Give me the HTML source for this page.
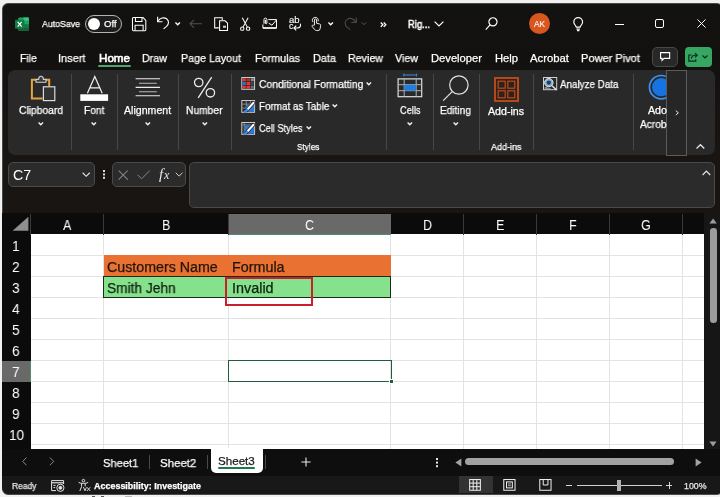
<!DOCTYPE html>
<html lang="en"><head><meta charset="utf-8"><title>Excel</title>
<style>
*{margin:0;padding:0;box-sizing:border-box}
html,body{width:720px;height:497px;overflow:hidden;background:#f1f1f1;font-family:"Liberation Sans",sans-serif}
.a{position:absolute}
.t{will-change:transform;-webkit-text-stroke:0.25px currentColor;position:absolute;white-space:nowrap;line-height:1;transform-origin:0 50%;display:block}
svg{position:absolute;overflow:visible}
#win{position:absolute;left:1.5px;top:2.8px;width:721px;height:491.8px;background:linear-gradient(to bottom,#121210 0,#131110 60px,#191513 158px,#191513 100%);border-radius:6px;overflow:hidden;border:0.8px solid #4a4a4a}
.sep{top:74px;width:1px;height:76px;background:#474747}
.chv{width:6px;height:4px;fill:none;stroke:#f0f0f0;stroke-width:1.45}
.fb{background:#2b2b2b;border:1px solid #4a4a4a;border-radius:5px}
.vl{top:234px;width:1px;height:214.5px;background:#e3e3e3}
.hl{left:31px;width:673.3px;height:1px;background:#e3e3e3}
.hs{top:214px;width:1px;height:20.5px;background:#3a3a3a}

</style></head>
<body>
<div id="win"></div>
<!-- ===== title bar ===== -->
<svg style="left:15px;top:16.6px" width="14.3" height="14.3" viewBox="0 0 15 15">
  <rect x="3.5" y="0.5" width="11" height="14" rx="1.2" fill="#21a366"/>
  <rect x="9" y="0.5" width="5.5" height="3.6" fill="#33c481"/>
  <rect x="9" y="4.1" width="5.5" height="3.5" fill="#21a366"/>
  <rect x="9" y="7.6" width="5.5" height="3.5" fill="#107c41"/>
  <rect x="3.5" y="7.6" width="5.5" height="3.5" fill="#185c37"/>
  <rect x="3.5" y="11.1" width="11" height="3.4" fill="#185c37"/>
  <rect x="0" y="2.8" width="9.8" height="9.6" rx="1" fill="#107c41"/>
  <path d="M2.8 5 L7 10.2 M7 5 L2.8 10.2" stroke="#fff" stroke-width="1.3" fill="none"/>
</svg>
<div class="a" style="left:85px;top:15px;width:37.2px;height:17.8px;border:1px solid #b4b4b4;border-radius:9px;background:#1e1e1e"></div>
<div class="a" style="left:87.8px;top:18px;width:12px;height:11.8px;border-radius:6px;background:#fff"></div>
<!-- save -->
<svg style="left:132px;top:16.7px" width="14.4" height="14.4" viewBox="0 0 15 15" fill="none" stroke="#fff" stroke-width="1.1">
  <path d="M1.5 0.6 H11.5 L14.4 3.5 V13.4 a1 1 0 0 1 -1 1 H1.5 a1 1 0 0 1 -1 -1 V1.6 a1 1 0 0 1 1 -1 Z"/>
  <path d="M3.6 0.8 V4.6 H10.4 V0.8"/>
  <path d="M3.2 14.2 V8.6 H11.6 V14.2"/>
</svg>
<!-- undo -->
<svg style="left:155.6px;top:15.4px" width="14.6" height="15.6" viewBox="0 0 16 16" fill="none" stroke="#fff" stroke-width="1.25">
  <path d="M1.8 1.5 V6.8 H7.1"/>
  <path d="M2.2 6.4 C4.2 2.8 8.6 1.4 11.6 3.6 C14.6 5.8 14.2 9.6 11.6 11.9 L8.3 14.6"/>
</svg>
<svg style="left:174.8px;top:21.6px" width="5.4" height="3.6" viewBox="0 0 6 4" fill="none" stroke="#fff" stroke-width="1.5"><path d="M0.5 0.5 L3 3 L5.5 0.5"/></svg>
<!-- back arrow (disabled) -->
<svg style="left:189.4px;top:18px" width="14" height="12" viewBox="0 0 14 12" fill="none" stroke="#505050" stroke-width="1.1"><path d="M13 5.8 H1 M5 1.8 L1 5.8 L5 9.8"/></svg>
<!-- paste -->
<svg style="left:213.6px;top:16.6px" width="14.4" height="14.2" viewBox="0 0 15 15" fill="none" stroke="#fff" stroke-width="1.1">
  <path d="M5 11.5 H0.6 V0.8 H8.6 V3.2"/>
  <path d="M5.8 4 H11.6 L14.2 6.6 V14.3 H5.8 Z" fill="#121110"/>
  <rect x="9.4" y="9.2" width="3.2" height="2.2" fill="#cfcfcf" stroke="none"/>
</svg>
<!-- scissors -->
<svg style="left:239.8px;top:16.8px" width="10.4" height="14.4" viewBox="0 0 11 15" fill="none" stroke="#fff" stroke-width="1.1">
  <path d="M2.4 0.6 L7.8 10.6 M8.6 0.6 L3.2 10.6"/>
  <circle cx="2.4" cy="12.2" r="1.8"/><circle cx="8.6" cy="12.2" r="1.8"/>
</svg>
<!-- email -->
<svg style="left:262.2px;top:16.6px" width="15.4" height="12.2" viewBox="0 0 17 13" fill="none" stroke="#fff" stroke-width="1.1">
  <path d="M7 2.6 H16 V12 H1 V8"/>
  <path d="M7.4 6.6 L11 8.8 L16 3"/>
  <path d="M2.2 7.2 V2.6 a1.6 1.6 0 0 1 3.2 0 V6.4 a0.8 0.8 0 0 1 -1.6 0 V3"/>
  <path d="M1 11.9 H16" stroke-width="1.6"/>
</svg>
<!-- touch -->
<svg style="left:309.6px;top:16.6px" width="12.4" height="14.4" viewBox="0 0 15 17" fill="none" stroke="#fff" stroke-width="1.1">
  <path d="M5.4 9.6 V3.4 a1.3 1.3 0 0 1 2.6 0 V7.4 L11.6 8.2 a1.6 1.6 0 0 1 1.3 1.8 L12.2 14 a2.6 2.6 0 0 1 -2.6 2.2 H8 a3 3 0 0 1 -2.4 -1.2 L2.6 11.2 a1.1 1.1 0 0 1 1.6 -1.4 Z"/>
  <path d="M3.6 6 A3.6 3.6 0 1 1 9.8 5"/>
</svg>
<svg style="left:327.8px;top:21.8px" width="5.4" height="3.6" viewBox="0 0 6 4" fill="none" stroke="#fff" stroke-width="1.5"><path d="M0.5 0.5 L3 3 L5.5 0.5"/></svg>
<!-- redo (disabled) -->
<svg style="left:343px;top:16px" width="15" height="15" viewBox="0 0 16 16" fill="none" stroke="#484848" stroke-width="1.2">
  <path d="M14.2 1.5 V6.8 H8.9"/>
  <path d="M13.8 6.4 C11.8 2.8 7.4 1.4 4.4 3.6 C1.4 5.8 1.8 9.6 4.4 11.9 L7.7 14.6"/>
</svg>
<svg style="left:361px;top:21.8px" width="5.6" height="3.6" viewBox="0 0 6 4" fill="none" stroke="#5a5a5a" stroke-width="1.1"><path d="M0.5 0.5 L3 3 L5.5 0.5"/></svg>
<!-- >> -->
<svg style="left:379.6px;top:21.8px" width="6.6" height="5.4" viewBox="0 0 7 6" fill="none" stroke="#fff" stroke-width="1.5"><path d="M0.7 0.6 L3 3 L0.7 5.4 M4 0.6 L6.3 3 L4 5.4"/></svg>
<svg style="left:434px;top:21px" width="10" height="6" viewBox="0 0 10 6" fill="none" stroke="#fff" stroke-width="1.2"><path d="M0.6 0.6 L5 5 L9.4 0.6"/></svg>
<!-- search -->
<svg style="left:485px;top:16.6px" width="13" height="13.6" viewBox="0 0 13 14" fill="none" stroke="#fff" stroke-width="1.2"><circle cx="8" cy="5" r="4.2"/><path d="M5 8.2 L0.6 13"/></svg>
<!-- avatar -->
<div class="a" style="left:528.6px;top:13.3px;width:21px;height:21px;border-radius:11px;background:#d7571f"></div>
<!-- bulb -->
<svg style="left:573.4px;top:16.6px" width="10.4" height="14.6" viewBox="0 0 11 16" fill="none" stroke="#fff" stroke-width="1.3">
  <path d="M3.4 11.2 C3.2 9.4 0.7 8.2 0.7 5.4 A4.8 4.8 0 0 1 10.3 5.4 C10.3 8.2 7.8 9.4 7.6 11.2 Z"/>
  <path d="M3.6 13.2 H7.4 M4.2 15 H6.8"/>
</svg>
<!-- window controls -->
<div class="a" style="left:615px;top:23.5px;width:9px;height:1.2px;background:#fff"></div>
<div class="a" style="left:655.4px;top:19.2px;width:9px;height:9px;border:1.1px solid #fff;border-radius:2px"></div>
<svg style="left:697px;top:19.2px" width="9" height="9" viewBox="0 0 10 10" fill="none" stroke="#fff" stroke-width="1.1"><path d="M0.5 0.5 L9.5 9.5 M9.5 0.5 L0.5 9.5"/></svg>
<!-- ===== tab row ===== -->
<div class="a" style="left:98.4px;top:65.1px;width:32.2px;height:1.8px;border-radius:1px;background:#4da66f"></div>
<div class="a" style="left:651.5px;top:46.5px;width:26px;height:20px;border:1px solid #484848;border-radius:5px;background:#282828"></div>
<svg style="left:659.6px;top:52px" width="10.2" height="9.4" viewBox="0 0 11 10" fill="none" stroke="#fff" stroke-width="1.2"><path d="M0.6 0.6 H10.4 V6.8 H4.4 L2.2 9 V6.8 H0.6 Z"/></svg>
<div class="a" style="left:685px;top:47px;width:27px;height:20px;border-radius:4px;background:#35a763"></div>
<svg style="left:688.4px;top:51.8px" width="10" height="9.8" viewBox="0 0 11 11" fill="none" stroke="#0c2a18" stroke-width="1.3"><path d="M4 3.4 H0.8 V10.2 H8.6 V8.2"/><path d="M3.6 7.4 C4 5 5.6 3.6 7.8 3.6 H10 M7.8 1.2 L10.2 3.6 L7.8 6"/></svg>
<svg style="left:702px;top:55px" width="6" height="4" viewBox="0 0 6 4" fill="none" stroke="#0c2a18" stroke-width="1.2"><path d="M0.5 0.5 L3 3 L5.5 0.5"/></svg>
<!-- ===== ribbon ===== -->
<div class="a" id="rib" style="left:8px;top:70px;width:706.6px;height:85px;border-radius:7px;background:#292929"></div>
<!-- separators -->
<div class="a sep" style="left:70.5px"></div>
<div class="a sep" style="left:117px"></div>
<div class="a sep" style="left:178px"></div>
<div class="a sep" style="left:230.5px"></div>
<div class="a sep" style="left:386px"></div>
<div class="a sep" style="left:432.5px"></div>
<div class="a sep" style="left:479px"></div>
<div class="a sep" style="left:532.5px"></div>
<div class="a sep" style="left:633px"></div>
<!-- clipboard icon -->
<svg style="left:30px;top:74px" width="27" height="28" viewBox="0 0 27 28" fill="none">
  <path d="M6 5.8 H1.9 V24.4 H12.5" stroke="#e3a445" stroke-width="2"/>
  <path d="M15.4 5.8 H19.2 V12" stroke="#e3a445" stroke-width="2"/>
  <path d="M6 8.2 V5.4 H8.6 C8.6 3.4 9.6 2.2 11 2.2 C12.4 2.2 13.4 3.4 13.4 5.4 H16 V8.2 Z" stroke="#d0d0d0" stroke-width="1.1" fill="#3a3a3a"/>
  <rect x="13.4" y="12.8" width="11.4" height="13.8" stroke="#dcdcdc" stroke-width="1.2" fill="#333"/>
</svg>
<!-- font icon -->
<svg style="left:80px;top:75px" width="29" height="27" viewBox="0 0 29 27" fill="none">
  <path d="M7.4 18.3 L14.8 1.6 L22.2 18.3 M10 12.9 H19.6" stroke="#f2f2f2" stroke-width="1.2"/>
  <rect x="0.3" y="19.3" width="27.8" height="6.6" fill="#fff"/>
</svg>
<!-- alignment icon -->
<svg style="left:135px;top:77px" width="26" height="20" viewBox="0 0 26 20" fill="none" stroke-width="1.1">
  <path d="M0.6 1.7 H25 M0.6 10.4 H25 M0.6 18.8 H25" stroke="#ececec"/>
  <path d="M4 6.2 H21.8 M4 14.7 H21.8" stroke="#b9b9b9"/>
</svg>
<!-- percent icon -->
<svg style="left:193px;top:76px" width="24" height="23" viewBox="0 0 24 23" fill="none" stroke="#ececec" stroke-width="1.3">
  <circle cx="5.7" cy="6.5" r="4.2"/><circle cx="17.4" cy="16.8" r="4.2"/><path d="M18.7 1.2 L5.2 21.9"/>
</svg>
<!-- big chevrons -->
<svg class="chv" style="left:38.2px;top:121.6px"><path d="M0.6 0.6 L2.8 2.8 L5 0.6"/></svg>
<svg class="chv" style="left:91.4px;top:121.6px"><path d="M0.6 0.6 L2.8 2.8 L5 0.6"/></svg>
<svg class="chv" style="left:145px;top:121.6px"><path d="M0.6 0.6 L2.8 2.8 L5 0.6"/></svg>
<svg class="chv" style="left:201.6px;top:121.6px"><path d="M0.6 0.6 L2.8 2.8 L5 0.6"/></svg>
<svg class="chv" style="left:407.2px;top:121.6px"><path d="M0.6 0.6 L2.8 2.8 L5 0.6"/></svg>
<svg class="chv" style="left:452.8px;top:121.6px"><path d="M0.6 0.6 L2.8 2.8 L5 0.6"/></svg>
<svg class="chv" style="left:366.2px;top:82.2px"><path d="M0.6 0.6 L2.8 2.8 L5 0.6"/></svg>
<svg class="chv" style="left:332px;top:104.4px"><path d="M0.6 0.6 L2.8 2.8 L5 0.6"/></svg>
<svg class="chv" style="left:305.8px;top:126.2px"><path d="M0.6 0.6 L2.8 2.8 L5 0.6"/></svg>
<!-- conditional formatting icon -->
<svg style="left:241px;top:77.2px" width="14.4" height="12.8" viewBox="0 0 14 13">
  <rect x="0.5" y="0.5" width="13" height="12" fill="#2e2e2e" stroke="#cfcfcf" stroke-width="1"/>
  <rect x="1.3" y="1.3" width="3.3" height="2.9" fill="#e23838"/><rect x="5.4" y="1.3" width="3.6" height="2.9" fill="#b82c2c"/><rect x="9.8" y="1.3" width="2.9" height="2.9" fill="#8e8e8e"/>
  <rect x="1.3" y="5" width="3.3" height="3.2" fill="#2f6fc4"/><rect x="5.4" y="5" width="3.6" height="3.2" fill="#e23838"/><rect x="9.8" y="5" width="2.9" height="3.2" fill="#444"/>
  <rect x="1.3" y="9" width="3.3" height="2.8" fill="#e23838"/><rect x="5.4" y="9" width="3.6" height="2.8" fill="#e23838"/><rect x="9.8" y="9" width="2.9" height="2.8" fill="#6c6c6c"/>
</svg>
<!-- format as table icon -->
<svg style="left:241px;top:99.8px" width="14.4" height="12.8" viewBox="0 0 14 13">
  <rect x="0.5" y="0.5" width="13" height="12" fill="#2e2e2e" stroke="#cfcfcf" stroke-width="1"/>
  <path d="M5 1 V12 M9.2 1 V12 M1 4.2 H13 M1 8.2 H13" stroke="#9a9a9a" stroke-width="0.8"/>
  <path d="M5.4 4.6 H13 V12 H5.4 Z" fill="#2b7be0"/>
  <path d="M12.4 2.8 L5.2 10.6" stroke="#262626" stroke-width="3.6" stroke-linecap="round"/>
  <path d="M12.4 2.8 L6.4 9.4" stroke="#fff" stroke-width="2" stroke-linecap="round"/>
  <path d="M5.8 10 L3.4 12.2" stroke="#3b8df0" stroke-width="2.2" stroke-linecap="round"/>
</svg>
<!-- cell styles icon -->
<svg style="left:241px;top:122px" width="14.4" height="12.8" viewBox="0 0 14 13">
  <rect x="0.5" y="0.5" width="13" height="12" fill="#2e2e2e" stroke="#cfcfcf" stroke-width="1"/>
  <path d="M1 3 H13 M3 1 V12" stroke="#9a9a9a" stroke-width="0.8"/>
  <path d="M3.4 3.4 H13 V12 H3.4 Z" fill="#2b7be0"/>
  <path d="M12.4 2.8 L5.2 10.6" stroke="#262626" stroke-width="3.6" stroke-linecap="round"/>
  <path d="M12.4 2.8 L6.4 9.4" stroke="#fff" stroke-width="2" stroke-linecap="round"/>
  <path d="M5.8 10 L3.4 12.2" stroke="#3b8df0" stroke-width="2.2" stroke-linecap="round"/>
</svg>
<!-- cells icon -->
<svg style="left:397px;top:73px" width="26" height="25" viewBox="0 0 26 25" fill="none">
  <path d="M6.8 2 H19.6 M6.8 0.6 V3.4 M19.6 0.6 V3.4" stroke="#3a8ee6" stroke-width="1"/>
  <rect x="1.1" y="5.9" width="23.6" height="17.8" stroke="#e0e0e0" stroke-width="1.2"/>
  <path d="M7.2 6 V23.6 M19.2 6 V23.6 M1.2 11.7 H24.6 M1.2 17.7 H24.6" stroke="#b0b0b0" stroke-width="1"/>
  <rect x="7.4" y="11.8" width="11.8" height="5.8" fill="#1f7fe0"/>
</svg>
<!-- editing icon -->
<svg style="left:442px;top:74px" width="28" height="28" viewBox="0 0 28 28" fill="none" stroke="#e4e4e4" stroke-width="1.2">
  <circle cx="16.9" cy="11" r="9.2"/><path d="M10.2 17.6 L1.2 26.6"/>
</svg>
<!-- add-ins icon -->
<svg style="left:494px;top:77px" width="25" height="25" viewBox="0 0 25 25" fill="none" stroke="#bd4b1b">
  <rect x="1" y="1" width="23" height="23" stroke-width="1.9" fill="#30201a"/>
  <rect x="4.2" y="4.2" width="7" height="7" stroke-width="1.2"/><rect x="13.8" y="4.2" width="7" height="7" stroke-width="1.2"/>
  <rect x="4.2" y="13.8" width="7" height="7" stroke-width="1.2"/><rect x="13.8" y="13.8" width="7" height="7" stroke-width="1.2"/>
</svg>
<!-- analyze data icon -->
<svg style="left:543px;top:77px" width="15" height="14" viewBox="0 0 15 14" fill="none">
  <rect x="0.5" y="0.5" width="13.2" height="12.2" stroke="#cfcfcf" stroke-width="1"/>
  <path d="M1.6 10.4 H4.4 M1.6 11.6 H7.6" stroke="#aaa" stroke-width="0.8"/>
  <circle cx="5.8" cy="5.6" r="4.2" stroke="#e6e6e6" stroke-width="1" fill="#7fb0e0"/>
  <circle cx="5.8" cy="5.6" r="2.2" fill="#2c3e55"/>
  <path d="M9 8.8 L13.6 13" stroke="#e6e6e6" stroke-width="1.5"/>
</svg>
<!-- adobe icon -->
<svg style="left:648px;top:74px" width="19" height="27" viewBox="0 0 19 27" fill="none">
  <circle cx="13.2" cy="13.2" r="11.7" stroke="#3d92ee" stroke-width="1.7"/>
  <circle cx="13.2" cy="13.2" r="9.1" fill="#1873e2"/>
</svg>
<!-- overlay scroll button -->
<div class="a" style="left:666px;top:70px;width:21px;height:85.5px;background:#262626;border:1px solid #5c5c5c"></div>
<svg style="left:675px;top:110px" width="5" height="6" viewBox="0 0 5 6" fill="none" stroke="#e8e8e8" stroke-width="1"><path d="M0.8 0.6 L3.4 2.8 L0.8 5"/></svg>
<svg style="left:696px;top:144px" width="9" height="5" viewBox="0 0 9 5" fill="none" stroke="#e8e8e8" stroke-width="1.2"><path d="M0.5 4.5 L4.4 0.7 L8.3 4.5"/></svg>
<!-- ===== formula bar ===== -->

<div class="a fb" style="left:8px;top:162.3px;width:87.4px;height:24.8px"></div>
<svg style="left:82px;top:172px" width="8.6" height="5.6" viewBox="0 0 9 6" fill="none" stroke="#e6e6e6" stroke-width="1.2"><path d="M0.6 0.8 L4.4 4.6 L8.2 0.8"/></svg>
<div class="a" style="left:103.3px;top:170px;width:1.6px;height:1.6px;background:#e0e0e0;box-shadow:0 3.4px 0 #e0e0e0,0 6.8px 0 #e0e0e0"></div>
<div class="a fb" style="left:112px;top:162.3px;width:73.5px;height:24.8px"></div>
<svg style="left:117.6px;top:169.6px" width="10.4" height="10.2" viewBox="0 0 10 10" fill="none" stroke="#8c8c8c" stroke-width="1"><path d="M0.5 0.5 L9.5 9.5 M9.5 0.5 L0.5 9.5"/></svg>
<svg style="left:136.8px;top:169.8px" width="13.4" height="9.6" viewBox="0 0 14 10" fill="none" stroke="#8c8c8c" stroke-width="1"><path d="M0.6 5 L4.8 9.2 L13.4 0.6"/></svg>
<svg style="left:174.6px;top:172px" width="8.4" height="5.4" viewBox="0 0 9 6" fill="none" stroke="#cfcfcf" stroke-width="1.1"><path d="M0.6 0.8 L4.4 4.6 L8.2 0.8"/></svg>
<div class="a fb" style="left:188.6px;top:162.3px;width:526.2px;height:45.4px;border-radius:5px"></div>
<svg style="left:702.4px;top:169.6px" width="9" height="6" viewBox="0 0 9 6" fill="none" stroke="#e6e6e6" stroke-width="1.2"><path d="M0.6 5 L4.4 1.2 L8.2 5"/></svg>
<!-- ===== grid ===== -->
<div class="a" style="left:2px;top:213px;width:702.3px;height:236px;background:#0b0b0b"></div>
<div class="a" style="left:30.6px;top:234px;width:673.7px;height:214.6px;background:#fff"></div>
<!-- gridlines vertical -->
<div class="a vl" style="left:103px"></div><div class="a vl" style="left:228px"></div><div class="a vl" style="left:390px"></div>
<div class="a vl" style="left:463px"></div><div class="a vl" style="left:536px"></div><div class="a vl" style="left:609px"></div><div class="a vl" style="left:682px"></div>
<!-- gridlines horizontal -->
<div class="a hl" style="top:255px"></div><div class="a hl" style="top:276px"></div><div class="a hl" style="top:297px"></div>
<div class="a hl" style="top:318px"></div><div class="a hl" style="top:339px"></div><div class="a hl" style="top:360px"></div>
<div class="a hl" style="top:381px"></div><div class="a hl" style="top:402px"></div><div class="a hl" style="top:423px"></div><div class="a hl" style="top:444px"></div>
<!-- header separators -->
<div class="a hs" style="left:30px"></div><div class="a hs" style="left:103px"></div><div class="a hs" style="left:228px"></div><div class="a hs" style="left:390px"></div>
<div class="a hs" style="left:463px"></div><div class="a hs" style="left:536px"></div><div class="a hs" style="left:609px"></div><div class="a hs" style="left:682px"></div>
<!-- select-all triangle -->
<svg style="left:12px;top:216.4px" width="17" height="15.8" viewBox="0 0 17 15"><path d="M16.4 0.4 V14.4 H0.6 Z" fill="#8f8f8f"/></svg>
<!-- selected col / row header -->
<div class="a" style="left:229px;top:213.5px;width:161.5px;height:21px;background:#696969;border-bottom:1.2px solid #4f8f6a"></div>
<div class="a" style="left:2px;top:361px;width:29px;height:20.6px;background:#696969;border-right:1.2px solid #4f8f6a"></div>
<!-- filled cells -->
<div class="a" style="left:104px;top:255px;width:287px;height:21.4px;background:#e97132"></div>
<div class="a" style="left:103.3px;top:276.3px;width:288px;height:21.4px;background:#86e18c;border:1px solid #1c2b1c"></div>
<!-- selection -->
<div class="a" style="left:228px;top:360px;width:164px;height:22.3px;border:1.7px solid #1f5e3c"></div>
<div class="a" style="left:388.6px;top:378.8px;width:5.2px;height:5.2px;background:#1f5e3c;border:0.9px solid #fff"></div>
<!-- red box -->
<div class="a" style="left:225px;top:277.2px;width:88px;height:29px;border:2.4px solid #cc1f2e"></div>
<!-- vertical scrollbar -->
<div class="a" style="left:704.3px;top:212px;width:16px;height:237px;background:#161616"></div>
<svg style="left:709.2px;top:217.7px" width="8.2" height="6.3" viewBox="0 0 8 6"><path d="M4 0.4 L7.6 5.4 H0.4 Z" fill="#9c9c9c"/></svg>
<div class="a" style="left:710px;top:228px;width:6.6px;height:95px;border-radius:3.3px;background:#9c9c9c"></div>
<svg style="left:709.3px;top:441px" width="8" height="6" viewBox="0 0 8 6"><path d="M4 5.6 L7.6 0.6 H0.4 Z" fill="#9c9c9c"/></svg>
<!-- ===== sheet tabs bar ===== -->
<div class="a" style="left:2px;top:448.5px;width:718px;height:27.5px;background:#0e0e0e"></div>
<svg style="left:21.6px;top:457.2px" width="5.4" height="8.8" viewBox="0 0 6 10" fill="none" stroke="#8e8e8e" stroke-width="1.1"><path d="M5 0.6 L0.8 5 L5 9.4"/></svg>
<svg style="left:49.2px;top:457.2px" width="5.4" height="8.8" viewBox="0 0 6 10" fill="none" stroke="#8e8e8e" stroke-width="1.1"><path d="M1 0.6 L5.2 5 L1 9.4"/></svg>
<div class="a" style="left:149px;top:455px;width:1px;height:14px;background:#4a4a4a"></div>
<div class="a" style="left:206.5px;top:455px;width:1px;height:14px;background:#4a4a4a"></div>
<div class="a" style="left:265.4px;top:455px;width:1px;height:14px;background:#4a4a4a"></div>
<div class="a" style="left:210.5px;top:448px;width:52px;height:25px;background:#fff;border-radius:0 0 5px 5px"></div>
<div class="a" style="left:217.5px;top:467.3px;width:37px;height:2px;border-radius:1px;background:#1d7a48"></div>
<svg style="left:301px;top:456.5px" width="10" height="10" viewBox="0 0 10 10" fill="none" stroke="#e8e8e8" stroke-width="1.1"><path d="M5 0.4 V9.6 M0.4 5 H9.6"/></svg>
<div class="a" style="left:436px;top:458px;width:1.8px;height:1.8px;background:#e6e6e6;box-shadow:0 3.6px 0 #e6e6e6,0 7.2px 0 #e6e6e6"></div>
<svg style="left:454.5px;top:457.5px" width="7" height="9" viewBox="0 0 7 9"><path d="M0.4 4.5 L6.4 0.4 V8.6 Z" fill="#a2a2a2"/></svg>
<div class="a" style="left:465px;top:457.6px;width:209.2px;height:7.6px;border-radius:3.8px;background:#a2a2a2"></div>
<svg style="left:695px;top:457.5px" width="7" height="9" viewBox="0 0 7 9"><path d="M6.6 4.5 L0.6 0.4 V8.6 Z" fill="#a2a2a2"/></svg>
<!-- ===== status bar ===== -->
<div class="a" style="left:2px;top:476px;width:718px;height:17.6px;background:#181818;border-radius:0 0 7px 7px"></div>
<div class="a" style="left:459px;top:476px;width:33.5px;height:17.4px;background:#333"></div>
<!-- abc arrow -->
<svg style="left:293.4px;top:23px" width="9" height="8" viewBox="0 0 9 8" fill="none" stroke="#fff" stroke-width="1.1"><path d="M7.3 0.6 C8.2 3 7 4.8 4.4 5 H1.2 M3.2 2.6 L0.9 5 L3.2 7.4"/></svg>
<!-- status icons -->
<svg style="left:51px;top:480px" width="14" height="12" viewBox="0 0 14 12" fill="none" stroke="#e6e6e6" stroke-width="1">
  <path d="M5 10.6 H0.6 V0.6 H12.6 V4"/><path d="M0.6 2.8 H12.6" stroke-width="1.2"/><path d="M2.4 5.4 H4.6 M2.4 7.6 H4.2"/>
  <circle cx="9.4" cy="7.8" r="3.6"/><circle cx="9.4" cy="7.8" r="1.5" fill="#e6e6e6"/>
</svg>
<svg style="left:78.4px;top:479.2px" width="13" height="13" viewBox="0 0 13 13" fill="none" stroke="#e6e6e6" stroke-width="1">
  <circle cx="5.4" cy="1.7" r="1.3"/>
  <path d="M0.6 3.4 C2.6 4.8 8.2 4.8 10.2 3.4 M3.6 4.6 V7.6 L1.8 12 M7.2 4.6 V7.4"/>
  <path d="M5.4 8 L7 11.8 L8.4 8.4 M9 8.2 L12.2 12 M12.2 8.2 L9 12" stroke-width="0.9"/>
</svg>
<!-- view buttons -->
<svg style="left:469.2px;top:479.2px" width="12" height="11.8" viewBox="0 0 13 13" fill="none" stroke="#f2f2f2" stroke-width="1.1">
  <rect x="0.6" y="0.6" width="11.8" height="11.8"/><path d="M4.5 0.6 V12.4 M8.5 0.6 V12.4 M0.6 4.5 H12.4 M0.6 8.5 H12.4"/>
</svg>
<svg style="left:503px;top:479.2px" width="13.2" height="11.8" viewBox="0 0 14 13" fill="none" stroke="#f2f2f2" stroke-width="1.1">
  <rect x="0.6" y="0.6" width="12.4" height="11.8"/><rect x="3.6" y="3.2" width="6.4" height="6.6"/><path d="M5.2 5.4 H8.4 M5.2 7.4 H8.4" stroke-width="0.8"/>
</svg>
<svg style="left:539px;top:479.2px" width="13.2" height="11.8" viewBox="0 0 14 13" fill="none" stroke="#f2f2f2" stroke-width="1.1">
  <rect x="0.6" y="0.6" width="12.4" height="11.8"/><path d="M4.4 0.6 V6.6 H9.6 V0.6"/>
</svg>
<!-- zoom slider -->
<div class="a" style="left:566px;top:485.2px;width:6px;height:1px;background:#d8d8d8"></div>
<div class="a" style="left:577px;top:485.2px;width:84.5px;height:1px;background:#d0d0d0"></div>
<div class="a" style="left:617.3px;top:480px;width:4px;height:11.4px;background:#b4b4b4"></div>
<div class="a" style="left:666px;top:485.2px;width:6.4px;height:1px;background:#d8d8d8"></div>
<div class="a" style="left:668.7px;top:482.4px;width:1px;height:6.6px;background:#d8d8d8"></div>
<!-- stray marks below window -->
<div class="a" style="left:92px;top:495.6px;width:3px;height:1.4px;background:#555"></div>
<div class="a" style="left:101px;top:495.6px;width:3px;height:1.4px;background:#555"></div>
<div class="a" style="left:125px;top:495.6px;width:7px;height:1.4px;background:#bbb"></div>

<span class="t" id="t0" style="left:42px;top:19.37px;font-size:9.6px;color:#fff;transform:scaleX(0.9133);">AutoSave</span>
<span class="t" id="t1" style="left:104px;top:19.37px;font-size:9.6px;color:#fff;transform:scaleX(0.9901);">Off</span>
<span class="t" id="t2" style="left:408px;top:18.61px;font-size:10.5px;color:#fff;transform:scaleX(0.8974);-webkit-text-stroke:0.5px #fff;">Rig...</span>
<span class="t" id="t3" style="left:533.6px;top:19.69px;font-size:8.4px;color:#fff;transform:scaleX(0.9832);-webkit-text-stroke:0.1px #fff;">AK</span>
<span class="t" id="t4" style="left:20px;top:52.52px;font-size:11.2px;color:#fff;transform:scaleX(0.9428);">File</span>
<span class="t" id="t5" style="left:58px;top:52.52px;font-size:11.2px;color:#fff;transform:scaleX(0.9827);">Insert</span>
<span class="t" id="t6" style="left:99px;top:52.52px;font-size:11.2px;color:#fff;transform:scaleX(1.0387);-webkit-text-stroke:0.6px #fff;">Home</span>
<span class="t" id="t7" style="left:142px;top:52.52px;font-size:11.2px;color:#fff;transform:scaleX(0.9575);">Draw</span>
<span class="t" id="t8" style="left:181px;top:52.52px;font-size:11.2px;color:#fff;transform:scaleX(0.9550);">Page Layout</span>
<span class="t" id="t9" style="left:255px;top:52.52px;font-size:11.2px;color:#fff;transform:scaleX(0.9651);">Formulas</span>
<span class="t" id="t10" style="left:313px;top:52.52px;font-size:11.2px;color:#fff;transform:scaleX(0.9729);">Data</span>
<span class="t" id="t11" style="left:348px;top:52.52px;font-size:11.2px;color:#fff;transform:scaleX(0.9540);">Review</span>
<span class="t" id="t12" style="left:395px;top:52.52px;font-size:11.2px;color:#fff;transform:scaleX(0.9565);">View</span>
<span class="t" id="t13" style="left:431px;top:52.52px;font-size:11.2px;color:#fff;transform:scaleX(1.0000);">Developer</span>
<span class="t" id="t14" style="left:495px;top:52.52px;font-size:11.2px;color:#fff;transform:scaleX(0.9993);">Help</span>
<span class="t" id="t15" style="left:530px;top:52.52px;font-size:11.2px;color:#fff;transform:scaleX(1.0113);">Acrobat</span>
<span class="t" id="t16" style="left:581px;top:52.52px;font-size:11.2px;color:#fff;transform:scaleX(0.9882);">Power Pivot</span>
<span class="t" id="t17" style="left:19px;top:105.03px;font-size:10.6px;color:#fff;transform:scaleX(0.9700);">Clipboard</span>
<span class="t" id="t18" style="left:84px;top:105.03px;font-size:10.6px;color:#fff;transform:scaleX(0.9668);">Font</span>
<span class="t" id="t19" style="left:124px;top:105.03px;font-size:10.6px;color:#fff;transform:scaleX(0.9977);">Alignment</span>
<span class="t" id="t20" style="left:186px;top:105.03px;font-size:10.6px;color:#fff;transform:scaleX(0.9685);">Number</span>
<span class="t" id="t21" style="left:258.6px;top:78.67px;font-size:10.9px;color:#fff;transform:scaleX(0.9527);">Conditional Formatting</span>
<span class="t" id="t22" style="left:258.6px;top:100.77px;font-size:10.9px;color:#fff;transform:scaleX(0.9038);">Format as Table</span>
<span class="t" id="t23" style="left:258.6px;top:122.87px;font-size:10.9px;color:#fff;transform:scaleX(0.8474);">Cell Styles</span>
<span class="t" id="t24" style="left:296.8px;top:142.24px;font-size:9.4px;color:#fff;transform:scaleX(0.8774);">Styles</span>
<span class="t" id="t25" style="left:399.5px;top:105.03px;font-size:10.6px;color:#fff;transform:scaleX(0.8706);">Cells</span>
<span class="t" id="t26" style="left:440px;top:105.03px;font-size:10.6px;color:#fff;transform:scaleX(0.9566);">Editing</span>
<span class="t" id="t27" style="left:488px;top:106.03px;font-size:10.6px;color:#fff;transform:scaleX(1.0022);">Add-ins</span>
<span class="t" id="t28" style="left:490.5px;top:142.04px;font-size:9.4px;color:#fff;transform:scaleX(0.9592);">Add-ins</span>
<span class="t" id="t29" style="left:560.4px;top:78.67px;font-size:10.9px;color:#fff;transform:scaleX(0.9015);">Analyze Data</span>
<span class="t" id="t30" style="left:647.5px;top:105.03px;font-size:10.6px;color:#fff;transform:scaleX(1.0075);overflow:hidden;">Ado</span>
<span class="t" id="t31" style="left:640px;top:118.53px;font-size:10.6px;color:#fff;transform:scaleX(0.9571);overflow:hidden;">Acrob</span>
<span class="t" id="t32" style="left:12.6px;top:168.25px;font-size:14px;color:#fff;transform:scaleX(1.0164);-webkit-text-stroke:0;">C7</span>
<span class="t" id="t33" style="left:62.9px;top:217.85px;font-size:14px;color:#fff;transform:scaleX(0.9000);-webkit-text-stroke:0;">A</span>
<span class="t" id="t34" style="left:162.3px;top:217.85px;font-size:14px;color:#fff;transform:scaleX(0.9000);-webkit-text-stroke:0;">B</span>
<span class="t" id="t35" style="left:305.44px;top:217.85px;font-size:14px;color:#fff;transform:scaleX(0.9000);-webkit-text-stroke:0;">C</span>
<span class="t" id="t36" style="left:422.74px;top:217.85px;font-size:14px;color:#fff;transform:scaleX(0.9000);-webkit-text-stroke:0;">D</span>
<span class="t" id="t37" style="left:496.2px;top:217.85px;font-size:14px;color:#fff;transform:scaleX(0.9000);-webkit-text-stroke:0;">E</span>
<span class="t" id="t38" style="left:569.45px;top:217.85px;font-size:14px;color:#fff;transform:scaleX(0.9000);-webkit-text-stroke:0;">F</span>
<span class="t" id="t39" style="left:641.4px;top:217.85px;font-size:14px;color:#fff;transform:scaleX(0.9000);-webkit-text-stroke:0;">G</span>
<span class="t" id="t40" style="left:12.2px;top:238.83px;font-size:14.5px;color:#fff;transform:scaleX(0.9408);-webkit-text-stroke:0;">1</span>
<span class="t" id="t41" style="left:12.2px;top:259.83px;font-size:14.5px;color:#fff;transform:scaleX(0.9408);-webkit-text-stroke:0;">2</span>
<span class="t" id="t42" style="left:12.2px;top:280.83px;font-size:14.5px;color:#fff;transform:scaleX(0.9408);-webkit-text-stroke:0;">3</span>
<span class="t" id="t43" style="left:12.2px;top:301.83px;font-size:14.5px;color:#fff;transform:scaleX(0.9408);-webkit-text-stroke:0;">4</span>
<span class="t" id="t44" style="left:12.2px;top:322.83px;font-size:14.5px;color:#fff;transform:scaleX(0.9408);-webkit-text-stroke:0;">5</span>
<span class="t" id="t45" style="left:12.2px;top:343.83px;font-size:14.5px;color:#fff;transform:scaleX(0.9408);-webkit-text-stroke:0;">6</span>
<span class="t" id="t46" style="left:12.2px;top:364.83px;font-size:14.5px;color:#fff;transform:scaleX(0.9408);-webkit-text-stroke:0;">7</span>
<span class="t" id="t47" style="left:12.2px;top:385.83px;font-size:14.5px;color:#fff;transform:scaleX(0.9408);-webkit-text-stroke:0;">8</span>
<span class="t" id="t48" style="left:12.2px;top:406.83px;font-size:14.5px;color:#fff;transform:scaleX(0.9408);-webkit-text-stroke:0;">9</span>
<span class="t" id="t49" style="left:8.8px;top:427.83px;font-size:14.5px;color:#fff;transform:scaleX(0.9417);-webkit-text-stroke:0;">10</span>
<span class="t" id="t50" style="left:106.6px;top:259.75px;font-size:14px;color:#23150c;transform:scaleX(1.0172);">Customers Name</span>
<span class="t" id="t51" style="left:231.6px;top:259.75px;font-size:14px;color:#23150c;transform:scaleX(1.0242);">Formula</span>
<span class="t" id="t52" style="left:106.6px;top:280.85px;font-size:14px;color:#10200f;transform:scaleX(0.9793);">Smith Jehn</span>
<span class="t" id="t53" style="left:231.6px;top:280.85px;font-size:14px;color:#10200f;transform:scaleX(1.0280);">Invalid</span>
<span class="t" id="t54" style="left:103.2px;top:457.38px;font-size:11.6px;color:#fff;transform:scaleX(0.9605);">Sheet1</span>
<span class="t" id="t55" style="left:160.2px;top:457.38px;font-size:11.6px;color:#fff;transform:scaleX(0.9878);">Sheet2</span>
<span class="t" id="t56" style="left:217.6px;top:454.68px;font-size:11.6px;color:#1a1a1a;transform:scaleX(1.0014);">Sheet3</span>
<span class="t" id="t57" style="left:11.5px;top:482.05px;font-size:8.8px;color:#e6e6e6;transform:scaleX(0.9631);">Ready</span>
<span class="t" id="t58" style="left:93.5px;top:482.05px;font-size:8.8px;color:#fff;transform:scaleX(1.0178);font-weight:bold;">Accessibility: Investigate</span>
<span class="t" id="t59" style="left:683.5px;top:482.05px;font-size:8.8px;color:#e6e6e6;transform:scaleX(1.0000);">100%</span>
<span class="t" id="t60" style="left:289.2px;top:16.29px;font-size:8.4px;color:#fff;transform:scaleX(1.1363);-webkit-text-stroke:0.1px #fff;">ab</span>
<span class="t" id="t61" style="left:289.2px;top:21.79px;font-size:8.4px;color:#fff;transform:scaleX(1.0507);-webkit-text-stroke:0.1px #fff;">c</span>
<span class="t" id="t62" style="left:159.2px;top:166.60px;font-size:15px;color:#e8e8e8;transform:scaleX(1.0000);font-family:'Liberation Serif',serif;font-style:italic;-webkit-text-stroke:0;">f</span>
<span class="t" id="t63" style="left:164.4px;top:169.14px;font-size:12px;color:#e8e8e8;transform:scaleX(1.0000);font-family:'Liberation Serif',serif;font-style:italic;-webkit-text-stroke:0;">x</span>
</body></html>
